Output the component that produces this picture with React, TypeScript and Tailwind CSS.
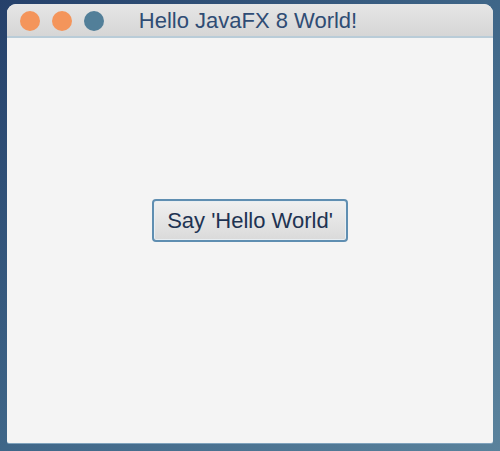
export default function App() {
  return (
    <div className="w-[500px] h-[451px] flex bg-gradient-to-br from-[#25406a] via-[#3f6688] to-[#5a829c] pt-[4px] pl-[7px] pr-[7px] pb-[8px] font-['Liberation_Sans',Arial,sans-serif]">
      <div className="flex-1 flex flex-col rounded-t-[9px] rounded-b-[2px] overflow-hidden bg-[#f4f4f4] shadow-[0_1px_0_#7fa2bc]">
        <div className="h-[34px] flex items-center relative bg-gradient-to-b from-[#e6e6e6] to-[#d6d6d6] border-b-2 border-[#b9ccd8]">
          <div className="absolute left-[13px] top-[7px] flex gap-[12px]">
            <span className="w-[20px] h-[20px] rounded-full bg-[#f4955b]" />
            <span className="w-[20px] h-[20px] rounded-full bg-[#f4955b]" />
            <span className="w-[20px] h-[20px] rounded-full bg-[#527f99]" />
          </div>
          <div className="flex-1 text-center text-[22px] text-[#2f4c74] leading-none pr-[4px] pt-[2px]">Hello JavaFX 8 World!</div>
        </div>
        <div className="flex-1 flex items-center justify-center pb-[40px]">
          <button className="w-[196px] h-[43px] rounded-[4px] border-2 border-[#5f8eb1] bg-gradient-to-b from-[#f0f0f0] to-[#dadada] text-[22px] text-[#1e3352] shadow-[inset_0_0_0_1px_#e8eef2]">
            Say 'Hello World'
          </button>
        </div>
      </div>
    </div>
  );
}
